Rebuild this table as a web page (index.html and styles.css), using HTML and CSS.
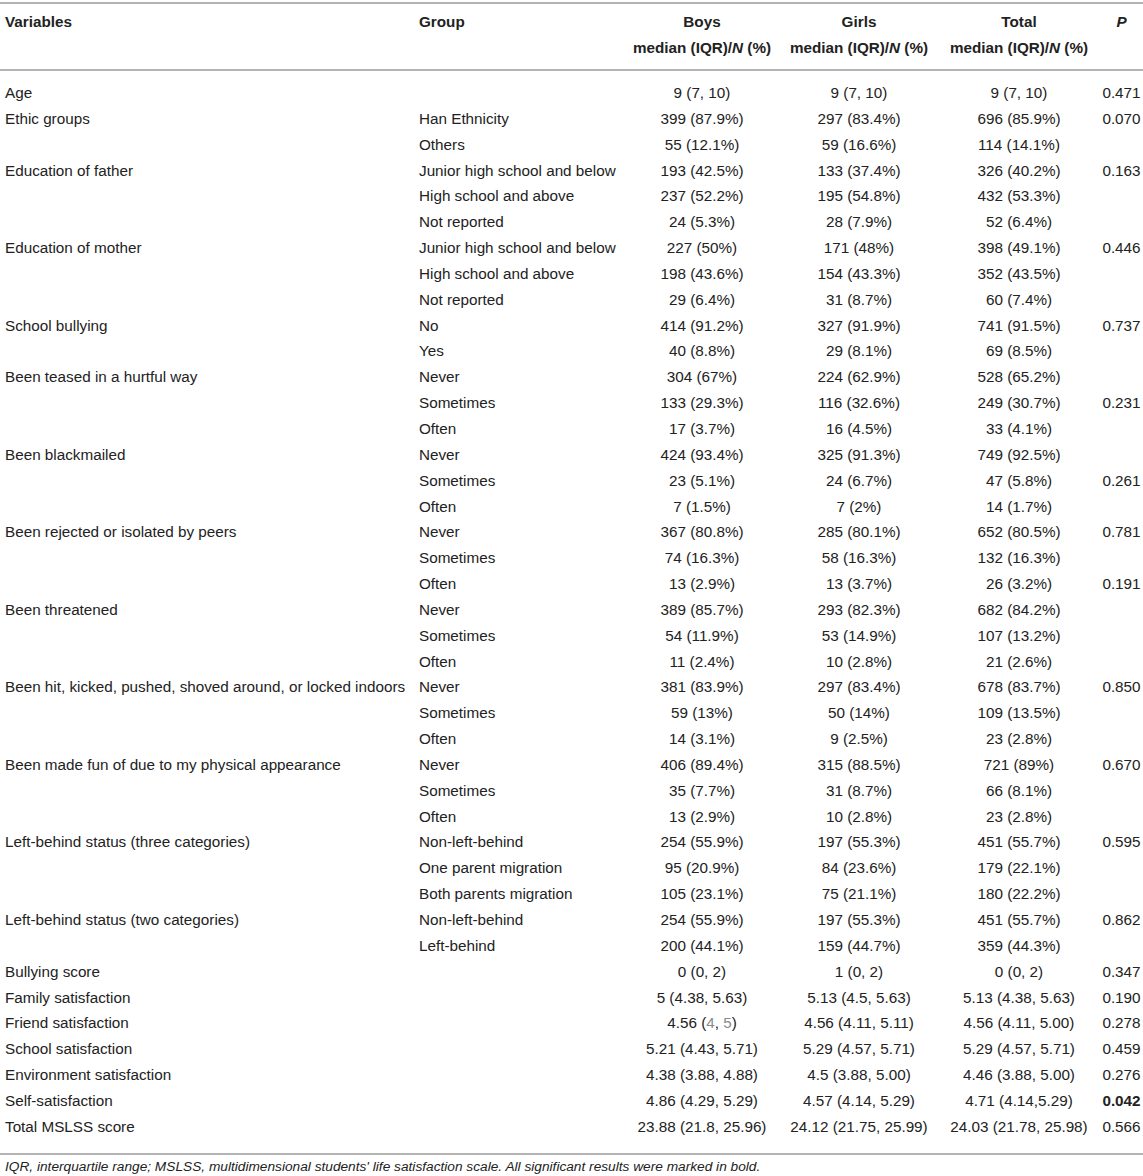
FILE: index.html
```html
<!DOCTYPE html>
<html lang="en">
<head>
<meta charset="utf-8">
<title>Table</title>
<link rel="stylesheet" href="styles.css">
</head>
<body>
<div class="wrap">
<table class="data">
<colgroup>
<col class="c-var"><col class="c-grp"><col class="c-boys"><col class="c-girls"><col class="c-total"><col class="c-p">
</colgroup>
<thead>
<tr>
<th class="left">Variables</th>
<th class="left">Group</th>
<th>Boys<br>median (IQR)/<i>N</i> (%)</th>
<th>Girls<br>median (IQR)/<i>N</i> (%)</th>
<th>Total<br>median (IQR)/<i>N</i> (%)</th>
<th><i>P</i></th>
</tr>
</thead>
<tbody>
<tr class="first"><td>Age</td><td></td><td>9 (7, 10)</td><td>9 (7, 10)</td><td>9 (7, 10)</td><td>0.471</td></tr>
<tr><td>Ethic groups</td><td>Han Ethnicity</td><td>399 (87.9%)</td><td>297 (83.4%)</td><td>696 (85.9%)</td><td>0.070</td></tr>
<tr><td></td><td>Others</td><td>55 (12.1%)</td><td>59 (16.6%)</td><td>114 (14.1%)</td><td></td></tr>
<tr><td>Education of father</td><td>Junior high school and below</td><td>193 (42.5%)</td><td>133 (37.4%)</td><td>326 (40.2%)</td><td>0.163</td></tr>
<tr><td></td><td>High school and above</td><td>237 (52.2%)</td><td>195 (54.8%)</td><td>432 (53.3%)</td><td></td></tr>
<tr><td></td><td>Not reported</td><td>24 (5.3%)</td><td>28 (7.9%)</td><td>52 (6.4%)</td><td></td></tr>
<tr><td>Education of mother</td><td>Junior high school and below</td><td>227 (50%)</td><td>171 (48%)</td><td>398 (49.1%)</td><td>0.446</td></tr>
<tr><td></td><td>High school and above</td><td>198 (43.6%)</td><td>154 (43.3%)</td><td>352 (43.5%)</td><td></td></tr>
<tr><td></td><td>Not reported</td><td>29 (6.4%)</td><td>31 (8.7%)</td><td>60 (7.4%)</td><td></td></tr>
<tr><td>School bullying</td><td>No</td><td>414 (91.2%)</td><td>327 (91.9%)</td><td>741 (91.5%)</td><td>0.737</td></tr>
<tr><td></td><td>Yes</td><td>40 (8.8%)</td><td>29 (8.1%)</td><td>69 (8.5%)</td><td></td></tr>
<tr><td>Been teased in a hurtful way</td><td>Never</td><td>304 (67%)</td><td>224 (62.9%)</td><td>528 (65.2%)</td><td></td></tr>
<tr><td></td><td>Sometimes</td><td>133 (29.3%)</td><td>116 (32.6%)</td><td>249 (30.7%)</td><td>0.231</td></tr>
<tr><td></td><td>Often</td><td>17 (3.7%)</td><td>16 (4.5%)</td><td>33 (4.1%)</td><td></td></tr>
<tr><td>Been blackmailed</td><td>Never</td><td>424 (93.4%)</td><td>325 (91.3%)</td><td>749 (92.5%)</td><td></td></tr>
<tr><td></td><td>Sometimes</td><td>23 (5.1%)</td><td>24 (6.7%)</td><td>47 (5.8%)</td><td>0.261</td></tr>
<tr><td></td><td>Often</td><td>7 (1.5%)</td><td>7 (2%)</td><td>14 (1.7%)</td><td></td></tr>
<tr><td>Been rejected or isolated by peers</td><td>Never</td><td>367 (80.8%)</td><td>285 (80.1%)</td><td>652 (80.5%)</td><td>0.781</td></tr>
<tr><td></td><td>Sometimes</td><td>74 (16.3%)</td><td>58 (16.3%)</td><td>132 (16.3%)</td><td></td></tr>
<tr><td></td><td>Often</td><td>13 (2.9%)</td><td>13 (3.7%)</td><td>26 (3.2%)</td><td>0.191</td></tr>
<tr><td>Been threatened</td><td>Never</td><td>389 (85.7%)</td><td>293 (82.3%)</td><td>682 (84.2%)</td><td></td></tr>
<tr><td></td><td>Sometimes</td><td>54 (11.9%)</td><td>53 (14.9%)</td><td>107 (13.2%)</td><td></td></tr>
<tr><td></td><td>Often</td><td>11 (2.4%)</td><td>10 (2.8%)</td><td>21 (2.6%)</td><td></td></tr>
<tr><td>Been hit, kicked, pushed, shoved around, or locked indoors</td><td>Never</td><td>381 (83.9%)</td><td>297 (83.4%)</td><td>678 (83.7%)</td><td>0.850</td></tr>
<tr><td></td><td>Sometimes</td><td>59 (13%)</td><td>50 (14%)</td><td>109 (13.5%)</td><td></td></tr>
<tr><td></td><td>Often</td><td>14 (3.1%)</td><td>9 (2.5%)</td><td>23 (2.8%)</td><td></td></tr>
<tr><td>Been made fun of due to my physical appearance</td><td>Never</td><td>406 (89.4%)</td><td>315 (88.5%)</td><td>721 (89%)</td><td>0.670</td></tr>
<tr><td></td><td>Sometimes</td><td>35 (7.7%)</td><td>31 (8.7%)</td><td>66 (8.1%)</td><td></td></tr>
<tr><td></td><td>Often</td><td>13 (2.9%)</td><td>10 (2.8%)</td><td>23 (2.8%)</td><td></td></tr>
<tr><td>Left-behind status (three categories)</td><td>Non-left-behind</td><td>254 (55.9%)</td><td>197 (55.3%)</td><td>451 (55.7%)</td><td>0.595</td></tr>
<tr><td></td><td>One parent migration</td><td>95 (20.9%)</td><td>84 (23.6%)</td><td>179 (22.1%)</td><td></td></tr>
<tr><td></td><td>Both parents migration</td><td>105 (23.1%)</td><td>75 (21.1%)</td><td>180 (22.2%)</td><td></td></tr>
<tr><td>Left-behind status (two categories)</td><td>Non-left-behind</td><td>254 (55.9%)</td><td>197 (55.3%)</td><td>451 (55.7%)</td><td>0.862</td></tr>
<tr><td></td><td>Left-behind</td><td>200 (44.1%)</td><td>159 (44.7%)</td><td>359 (44.3%)</td><td></td></tr>
<tr><td>Bullying score</td><td></td><td>0 (0, 2)</td><td>1 (0, 2)</td><td>0 (0, 2)</td><td>0.347</td></tr>
<tr><td>Family satisfaction</td><td></td><td>5 (4.38, 5.63)</td><td>5.13 (4.5, 5.63)</td><td>5.13 (4.38, 5.63)</td><td>0.190</td></tr>
<tr><td>Friend satisfaction</td><td></td><td>4.56 (<span class="muted">4</span>, <span class="muted">5</span>)</td><td>4.56 (4.11, 5.11)</td><td>4.56 (4.11, 5.00)</td><td>0.278</td></tr>
<tr><td>School satisfaction</td><td></td><td>5.21 (4.43, 5.71)</td><td>5.29 (4.57, 5.71)</td><td>5.29 (4.57, 5.71)</td><td>0.459</td></tr>
<tr><td>Environment satisfaction</td><td></td><td>4.38 (3.88, 4.88)</td><td>4.5 (3.88, 5.00)</td><td>4.46 (3.88, 5.00)</td><td>0.276</td></tr>
<tr><td>Self-satisfaction</td><td></td><td>4.86 (4.29, 5.29)</td><td>4.57 (4.14, 5.29)</td><td>4.71 (4.14,5.29)</td><td><b>0.042</b></td></tr>
<tr class="last"><td>Total MSLSS score</td><td></td><td>23.88 (21.8, 25.96)</td><td>24.12 (21.75, 25.99)</td><td>24.03 (21.78, 25.98)</td><td>0.566</td></tr>
</tbody>
</table>
<p class="note">IQR, interquartile range; MSLSS, multidimensional students' life satisfaction scale. All significant results were marked in bold.</p>
</div>
</body>
</html>
```

FILE: styles.css
```css
html, body {
  margin: 0;
  padding: 0;
  background: #ffffff;
}
body {
  font-family: "Liberation Sans", Arial, Helvetica, sans-serif;
  font-size: 15.25px;
  color: #222222;
}
.wrap {
  padding-top: 2px;
}
.data {
  width: 1143px;
  table-layout: fixed;
  border-collapse: collapse;
  border-top: 2px solid #b3b3b3;
  border-bottom: 2px solid #b3b3b3;
}
.c-var { width: 414px; }
.c-grp { width: 210px; }
.c-boys { width: 156px; }
.c-girls { width: 158px; }
.c-total { width: 162px; }
.c-p { width: 43px; }

.data th {
  font-weight: bold;
  text-align: center;
  vertical-align: top;
  line-height: 26px;
  padding: 5px 0 8px 0;
  border-bottom: 2px solid #b3b3b3;
  white-space: nowrap;
}
.data th.left {
  text-align: left;
  padding-left: 5px;
}
.data td {
  line-height: 25.85px;
  padding: 0;
  text-align: center;
  vertical-align: top;
  white-space: nowrap;
}
.data td:nth-child(1),
.data td:nth-child(2) {
  text-align: left;
  padding-left: 5px;
}
.data tr.first td {
  padding-top: 9px;
}
.data tr.last td {
  padding-bottom: 13px;
}
.muted {
  color: #8a8a8a;
}
.note {
  margin: 0;
  padding: 0 0 0 5px;
  font-size: 13.7px;
  font-style: italic;
  line-height: 24px;
}
```
